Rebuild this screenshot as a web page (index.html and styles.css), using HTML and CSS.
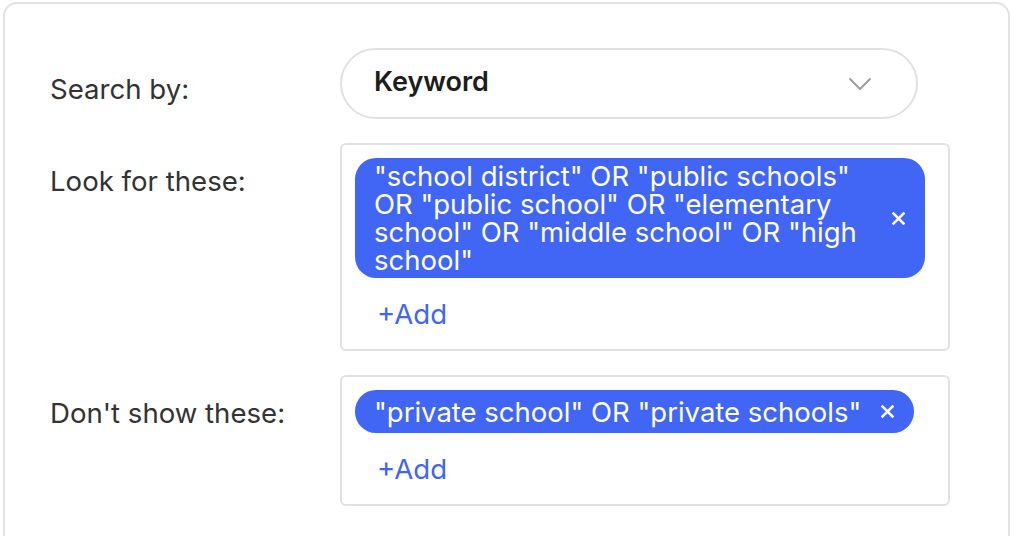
FILE: index.html
```html
<!DOCTYPE html>
<html lang="en">
<head>
<meta charset="utf-8">
<title>Search filters</title>
<link rel="stylesheet" href="styles.css">
</head>
<body>
<div class="card">
  <div class="form">
    <div class="label label-first">Search by:</div>
    <div class="select">
      <span class="select-value">Keyword</span>
      <svg class="chevron" width="22" height="12" viewBox="0 0 22 12"><polyline points="1,1 11,11 21,1" fill="none" stroke="#9b9b9b" stroke-width="1.8" stroke-linecap="round" stroke-linejoin="round"/></svg>
    </div>

    <div class="label">Look for these:</div>
    <div class="box">
      <div class="chip">
        <span class="chip-text">"school district" OR "public schools" OR "public school" OR "elementary school" OR "middle school" OR "high school"</span>
        <svg class="chip-x" width="13" height="13" viewBox="0 0 13 13"><path d="M1.5 1.5 L11.5 11.5 M11.5 1.5 L1.5 11.5" stroke="#fff" stroke-width="2.5" stroke-linecap="square"/></svg>
      </div>
      <div class="add">+Add</div>
    </div>

    <div class="label">Don't show these:</div>
    <div class="box">
      <div class="chip">
        <span class="chip-text">"private school" OR "private schools"</span>
        <svg class="chip-x" width="13" height="13" viewBox="0 0 13 13"><path d="M1.5 1.5 L11.5 11.5 M11.5 1.5 L1.5 11.5" stroke="#fff" stroke-width="2.5" stroke-linecap="square"/></svg>
      </div>
      <div class="add">+Add</div>
    </div>
  </div>
</div>
</body>
</html>
```

FILE: styles.css
```css
* { box-sizing: border-box; }

html, body {
  margin: 0;
  padding: 0;
  background: #ffffff;
  overflow: hidden;
}

body {
  font-family: Inter, "Noto Sans", "Liberation Sans", sans-serif;
  color: #333333;
}

.card {
  margin: 2px 6px 0 3px;
  min-height: 600px;
  border: 2px solid #e3e3e3;
  border-radius: 14px;
  padding: 44px 0 0 45px;
}

.form {
  display: grid;
  grid-template-columns: 290px 610px;
  row-gap: 24px;
  align-items: start;
}

.label {
  font-size: 27.6px;
  line-height: 28px;
  color: #333333;
  padding-top: 24px;
}

.label-first {
  padding-top: 27px;
}

.select {
  width: 578px;
  height: 71px;
  border: 2px solid #e1e1e1;
  border-radius: 36px;
  display: flex;
  align-items: center;
  justify-content: space-between;
  padding: 0 45px 0 32px;
}

.select-value {
  font-size: 27px;
  font-weight: 600;
  color: #1c1c1c;
  line-height: 28px;
  margin-top: -3px;
}

.chevron {
  flex: none;
}

.box {
  border: 2px solid #e1e1e1;
  border-radius: 6px;
  padding: 13px 23px 21px 13px;
  display: flex;
  flex-direction: column;
  align-items: flex-start;
}

.chip {
  display: flex;
  align-items: center;
  gap: 20px;
  max-width: 570px;
  min-height: 43px;
  padding: 4px 20px 4px 19px;
  background: #4166f5;
  color: #ffffff;
  border-radius: 21px;
  font-size: 27.5px;
  line-height: 28px;
}

.chip-text {
  flex: 0 1 auto;
}

.chip-x {
  flex: none;
}

.add {
  margin: 22px 0 0 22px;
  font-size: 27.6px;
  line-height: 28px;
  color: #4166f5;
}
```
